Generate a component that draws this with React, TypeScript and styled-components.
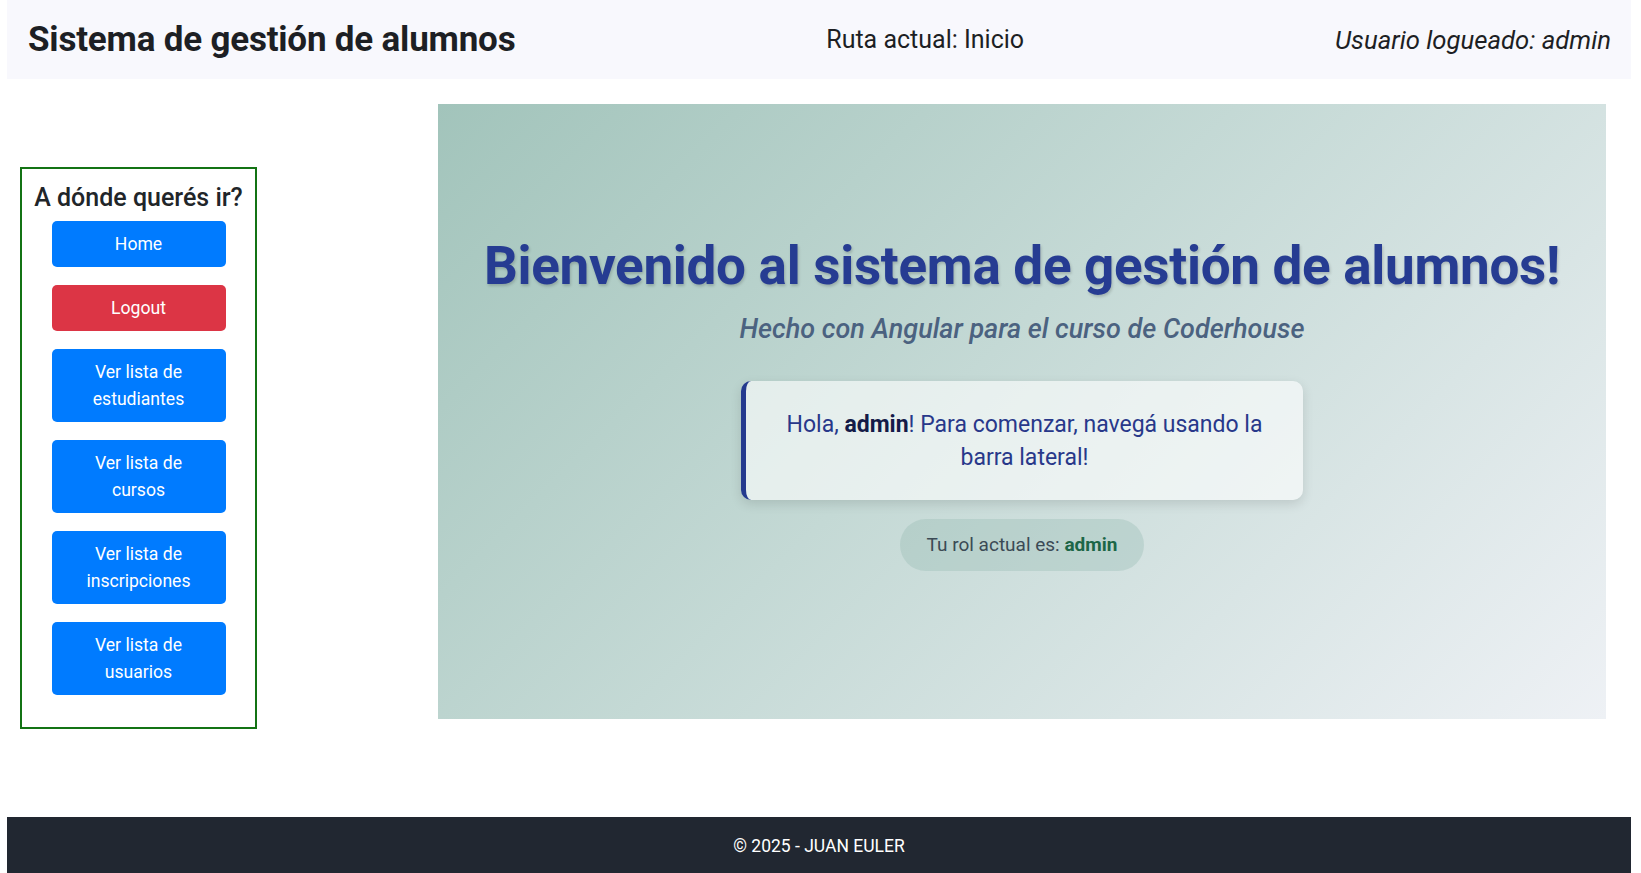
import React from 'react';
import styled, { createGlobalStyle } from 'styled-components';

const GlobalStyle = createGlobalStyle`
  html, body {
    margin: 0;
    padding: 0;
    overflow: hidden;
  }
  body {
    font-family: Roboto, "Liberation Sans", Arial, sans-serif;
    color: #212529;
    background: #ffffff;
  }
`;

const Page = styled.div`
  padding: 0 10px 0 7px;
`;

const Header = styled.header`
  height: 79px;
  box-sizing: border-box;
  padding: 0 20px 0 21px;
  background: #f8f8fd;
  display: flex;
  align-items: center;
  justify-content: space-between;
`;

const Brand = styled.h1`
  margin: 0;
  font-size: 35px;
  font-weight: 700;
  color: #1d1f24;
  letter-spacing: -0.2px;
`;

const RouteInfo = styled.span`
  font-size: 25px;
  color: #1d1f24;
`;

const UserInfo = styled.span`
  font-size: 25.7px;
  font-style: italic;
  color: #1d1f24;
`;

const Body = styled.div`
  display: flex;
  align-items: flex-start;
`;

const Sidebar = styled.nav`
  width: 237px;
  box-sizing: border-box;
  margin: 88px 0 0 13px;
  border: 2px solid #137314;
  padding: 14px 0 32px;
  display: flex;
  flex-direction: column;
  align-items: center;
`;

const SidebarTitle = styled.h2`
  margin: 0 0 9px;
  font-size: 25px;
  line-height: 29px;
  font-weight: 500;
  color: #212529;
`;

const NavList = styled.div`
  display: flex;
  flex-direction: column;
  gap: 18px;
`;

const NavButton = styled.button<{ $variant?: 'primary' | 'danger' }>`
  width: 174px;
  box-sizing: border-box;
  padding: 9.5px 20px;
  border: none;
  border-radius: 5px;
  font-family: inherit;
  font-size: 17.6px;
  line-height: 27px;
  color: #ffffff;
  cursor: pointer;
  background: ${({ $variant }) => ($variant === 'danger' ? '#dc3545' : '#007bff')};
`;

const Main = styled.main`
  width: 1168px;
  height: 615px;
  box-sizing: border-box;
  margin: 25px 0 0 181px;
  padding-top: 130px;
  background: linear-gradient(135deg, #a2c4bb 0%, #c4d9d5 45%, #eef1f5 100%);
  display: flex;
  flex-direction: column;
  align-items: center;
`;

const Headline = styled.h1`
  margin: 0;
  font-size: 53px;
  line-height: 64px;
  font-weight: 700;
  color: #263c92;
  letter-spacing: -0.3px;
  white-space: nowrap;
  text-shadow: 1px 2px 3px rgba(0, 0, 0, 0.18);
`;

const Subtitle = styled.p`
  margin: 11px 0 0;
  font-size: 27px;
  line-height: 40px;
  font-style: italic;
  font-weight: 500;
  color: #4b6280;
`;

const WelcomeCard = styled.div`
  margin-top: 32px;
  width: 562px;
  box-sizing: border-box;
  padding: 27px 30px 25px;
  border-left: 5px solid #243a8e;
  border-radius: 10px;
  background: rgba(255, 255, 255, 0.6);
  box-shadow: 0 4px 12px rgba(0, 0, 0, 0.12);
  font-size: 23px;
  line-height: 33.4px;
  color: #28388a;
  text-align: center;
`;

const Strong = styled.strong<{ $tone: string }>`
  font-weight: 700;
  color: ${({ $tone }) => $tone};
`;

const RolePill = styled.div`
  margin-top: 19px;
  padding: 12px 27px;
  border-radius: 30px;
  background: rgba(150, 185, 178, 0.35);
  font-size: 19px;
  line-height: 28px;
  color: #3b4a55;
`;

const Footer = styled.footer`
  margin-top: 88px;
  padding: 17px 0 14px;
  background: #212731;
  color: #ffffff;
  text-align: center;
  font-size: 17.5px;
  line-height: 25px;
`;

const navItems: { label: string; variant?: 'primary' | 'danger' }[] = [
  { label: 'Home' },
  { label: 'Logout', variant: 'danger' },
  { label: 'Ver lista de estudiantes' },
  { label: 'Ver lista de cursos' },
  { label: 'Ver lista de inscripciones' },
  { label: 'Ver lista de usuarios' },
];

const App = () => {
  return (
    <Page>
      <GlobalStyle />
      <Header>
        <Brand>Sistema de gestión de alumnos</Brand>
        <RouteInfo>Ruta actual: Inicio</RouteInfo>
        <UserInfo>Usuario logueado: admin</UserInfo>
      </Header>
      <Body>
        <Sidebar>
          <SidebarTitle>A dónde querés ir?</SidebarTitle>
          <NavList>
            {navItems.map((item) => (
              <NavButton key={item.label} $variant={item.variant}>
                {item.label}
              </NavButton>
            ))}
          </NavList>
        </Sidebar>
        <Main>
          <Headline>Bienvenido al sistema de gestión de alumnos!</Headline>
          <Subtitle>Hecho con Angular para el curso de Coderhouse</Subtitle>
          <WelcomeCard>
            Hola, <Strong $tone="#141b48">admin</Strong>! Para comenzar, navegá usando la barra
            lateral!
          </WelcomeCard>
          <RolePill>
            Tu rol actual es: <Strong $tone="#1d6647">admin</Strong>
          </RolePill>
        </Main>
      </Body>
      <Footer>© 2025 - JUAN EULER</Footer>
    </Page>
  );
};

export default App;
